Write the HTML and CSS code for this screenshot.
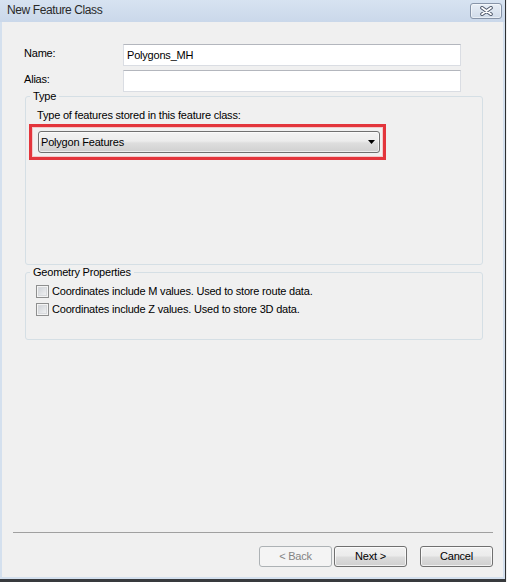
FILE: index.html
```html
<!DOCTYPE html>
<html>
<head>
<meta charset="utf-8">
<title>New Feature Class</title>
<link rel="stylesheet" href="styles.css">
</head>
<body>
<div class="window">
  <div class="titlebar">
    <span class="title">New Feature Class</span>
    <div class="close">
      <svg width="13" height="10" viewBox="0 0 13 10">
        <path d="M2 1.8 L11 8.2 M11 1.8 L2 8.2" stroke="#4b5568" stroke-width="3.6" stroke-linecap="round" fill="none"/>
        <path d="M2 1.8 L11 8.2 M11 1.8 L2 8.2" stroke="#ffffff" stroke-width="1.8" stroke-linecap="round" fill="none"/>
      </svg>
    </div>
  </div>
  <div class="client">
    <div class="form">
      <div class="field">
        <span class="label">Name:</span>
        <div class="textbox">Polygons_MH</div>
      </div>
      <div class="field">
        <span class="label">Alias:</span>
        <div class="textbox"></div>
      </div>
    </div>

    <fieldset class="group type-group">
      <legend>Type</legend>
      <div class="caption">Type of features stored in this feature class:</div>
      <div class="highlight">
        <div class="combo">
          <span>Polygon Features</span>
          <svg class="arrow" width="7" height="4" viewBox="0 0 7 4"><polygon points="0,0 7,0 3.5,4" fill="#000"/></svg>
        </div>
      </div>
    </fieldset>

    <fieldset class="group geom-group">
      <legend>Geometry Properties</legend>
      <div class="check-row"><span class="check"></span><span>Coordinates include M values. Used to store route data.</span></div>
      <div class="check-row"><span class="check"></span><span>Coordinates include Z values. Used to store 3D data.</span></div>
    </fieldset>

    <div class="separator"></div>
    <div class="buttons">
      <div class="btn disabled">&lt; Back</div>
      <div class="btn">Next &gt;</div>
      <div class="btn cancel">Cancel</div>
    </div>
  </div>
</div>
</body>
</html>
```

FILE: styles.css
```css
html, body {
  margin: 0;
  padding: 0;
  background: #f0f0f0;
}

body {
  font-family: "Liberation Sans", Arial, sans-serif;
  font-size: 11px;
  line-height: 13px;
  letter-spacing: -0.2px;
  color: #000;
}

.window {
  width: 506px;
  height: 582px;
  box-sizing: border-box;
  display: flex;
  flex-direction: column;
  background: #d4e0ee;
  border-right: 1px solid #2e3033;
  border-bottom: 3px solid #383a3d;
  padding: 0 2px 2px 2px;
}

.titlebar {
  height: 22px;
  margin: 0 -2px;
  display: flex;
  align-items: center;
  padding-left: 7px;
  background: linear-gradient(#d7e3f1, #cad8ea);
  flex-shrink: 0;
}

.title {
  font-size: 12px;
  letter-spacing: -0.4px;
  color: #2a2a2a;
  padding-bottom: 1px;
}

.close {
  margin-left: auto;
  margin-right: 3px;
  align-self: flex-start;
  margin-top: 3px;
  width: 32px;
  height: 16px;
  box-sizing: border-box;
  border: 1px solid #8794a8;
  border-radius: 3px;
  background: linear-gradient(#e8eef6, #d0dbe9);
  box-shadow: inset 0 0 0 1px rgba(255,255,255,0.5);
  display: flex;
  align-items: center;
  justify-content: center;
}

.client {
  flex: 1;
  background: #f0f0f0;
  display: flex;
  flex-direction: column;
  padding: 22px 0 10px 0;
}

.form {
  display: flex;
  flex-direction: column;
  gap: 4px;
  padding-left: 22px;
}

.field {
  display: flex;
  align-items: flex-start;
}

.label {
  width: 99px;
  padding-top: 3px;
}

.textbox {
  width: 338px;
  height: 22px;
  box-sizing: border-box;
  background: #fff;
  border: 1px solid #dadde3;
  border-top-color: #b3b6bd;
  padding-left: 3px;
  display: flex;
  align-items: center;
}

.group {
  margin: 0 0 0 23px;
  padding: 0;
  width: 458px;
  box-sizing: border-box;
  border: 1px solid #d5dfe5;
  border-radius: 3px;
  min-width: 0;
}

.group legend {
  margin-left: 4px;
  padding: 0 3px;
  line-height: 13px;
}

.type-group {
  margin-top: -2px;
  height: 175px;
}

.caption {
  margin: 6px 0 0 11px;
}

.highlight {
  margin: 2px 0 0 3px;
  width: 357px;
  height: 36px;
  box-sizing: border-box;
  border: 3px solid #e3353c;
  box-shadow: inset 0 0 0 1px #f3c9ca;
  padding: 4px 3px 4px 6px;
}

.combo {
  height: 22px;
  box-sizing: border-box;
  border: 1px solid #707070;
  border-radius: 3px;
  background: linear-gradient(#f3f3f3 0%, #ececec 45%, #dedede 55%, #d0d0d0 100%);
  box-shadow: inset 0 0 0 1px rgba(255,255,255,0.6);
  display: flex;
  align-items: center;
  padding: 0 4px 0 2px;
}

.combo .arrow {
  margin-left: auto;
}

.geom-group {
  margin-top: 1px;
  height: 74px;
  padding-top: 6px;
}

.check-row {
  display: flex;
  align-items: center;
  gap: 3px;
  margin-left: 10px;
  height: 13px;
  margin-bottom: 5px;
}

.check {
  width: 13px;
  height: 13px;
  box-sizing: border-box;
  border: 1px solid #8e8f8f;
  background: linear-gradient(135deg, #c9cdd3 0%, #eeeff0 80%, #f6f6f6 100%);
  box-shadow: inset 0 0 0 1px #f4f4f4, inset 0 0 0 2px #d8dadd;
  flex-shrink: 0;
}

.separator {
  margin-top: auto;
  margin-left: 11px;
  width: 480px;
  height: 1px;
  background: #a0a0a0;
}

.buttons {
  margin-top: 13px;
  display: flex;
  justify-content: flex-end;
  gap: 2px;
  padding-right: 10px;
}

.btn {
  width: 73px;
  height: 21px;
  box-sizing: border-box;
  border: 1px solid #707070;
  border-radius: 3px;
  background: linear-gradient(#f2f2f2 0%, #ebebeb 48%, #dddddd 52%, #cfcfcf 100%);
  box-shadow: inset 0 0 0 1px rgba(255,255,255,0.7);
  display: flex;
  align-items: center;
  justify-content: center;
}

.btn.disabled {
  border-color: #adb2b5;
  background: #f4f4f4;
  box-shadow: none;
  color: #838383;
}

.btn.cancel {
  margin-left: 11px;
}
```
